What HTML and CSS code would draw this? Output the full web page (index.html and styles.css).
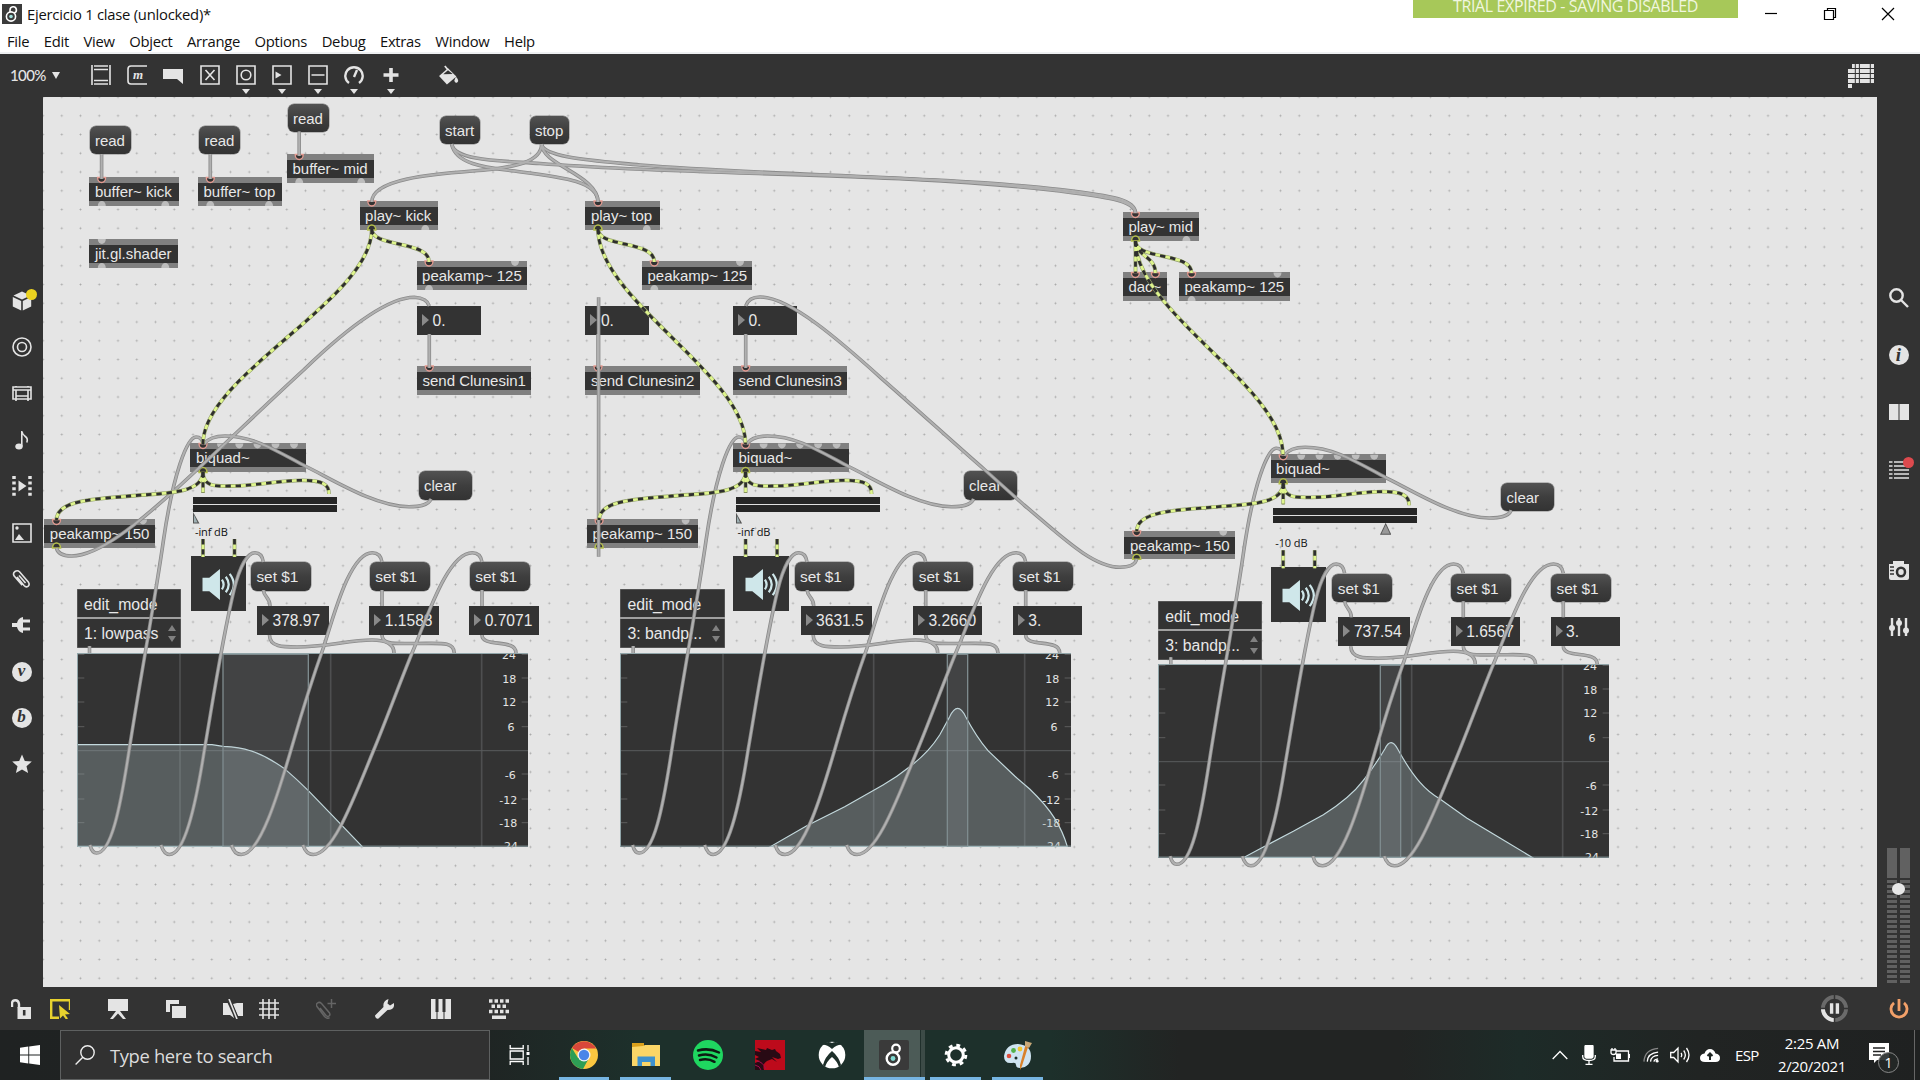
FILE: index.html
```html
<!DOCTYPE html>
<html lang="en">
<head>
<meta charset="utf-8">
<title>Ejercicio 1 clase (unlocked)*</title>
<link rel="stylesheet" href="styles.css">
</head>
<body>
<header class="titlebar">
  <svg class="app-icon" viewBox="0 0 20 20"><rect width="20" height="20" fill="#3b3b3b"/><circle cx="9" cy="12.5" r="4.6" fill="none" stroke="#fff" stroke-width="1.6"/><circle cx="9" cy="12.5" r="1.8" fill="#9fe0dc"/><path d="M8 8V6a3.2 3.2 0 1 1 4.2 3" fill="none" stroke="#fff" stroke-width="1.6"/></svg>
  <span class="window-title">Ejercicio 1 clase (unlocked)*</span>
  <span class="trial">TRIAL EXPIRED - SAVING DISABLED</span>
  <div class="window-controls">
    <svg viewBox="0 0 14 14"><path d="M1 6.5h12"/></svg>
    <svg viewBox="0 0 14 14"><path d="M1.5 3.5h9v9h-9zM4.500 3.500v-2h8v9h-2"/></svg>
    <svg viewBox="0 0 14 14"><path d="M1 1l12 12M13 1L1 13"/></svg>
  </div>
</header>
<nav class="menubar"><span>File</span><span>Edit</span><span>View</span><span>Object</span><span>Arrange</span><span>Options</span><span>Debug</span><span>Extras</span><span>Window</span><span>Help</span></nav>

<div class="toolbar">
  <div class="zoom-level">100% <i class="caret"></i></div>
  <div class="tools">
    <div class="tool"><svg viewBox="0 0 20 20"><path class="l" d="M1 0v20M19 0v20M3 1h14M3 4.500h14M3 15.500h14M3 19h14"/></svg></div>
    <div class="tool"><svg viewBox="0 0 20 20"><path class="l" d="M20 1H4Q1 1 1 4v12q0 3 3 3h16"/><text x="6" y="14" class="glyph-m">m</text></svg></div>
    <div class="tool"><svg viewBox="0 0 20 20"><path class="f" d="M0 4h20v15l-6-5H0z"/></svg></div>
    <div class="tool"><svg viewBox="0 0 20 20"><path class="l" d="M1 1h18v18H1zM5.500 5l9 10M14.500 5l-9 10"/></svg></div>
    <div class="tool"><svg viewBox="0 0 20 20"><path class="l" d="M1 1h18v18H1z"/><circle class="l" cx="10" cy="10" r="4.800"/></svg><i class="caret"></i></div>
    <div class="tool"><svg viewBox="0 0 20 20"><path class="l" d="M1 1h18v18H1z"/><path class="f" d="M3.500 6.500l6 3.500-6 3.500z"/></svg><i class="caret"></i></div>
    <div class="tool"><svg viewBox="0 0 20 20"><path class="l" d="M1 1h18v18H1zM3.500 10h13"/></svg><i class="caret"></i></div>
    <div class="tool"><svg viewBox="0 0 20 20"><path class="h" d="M5 18A8.700 8.700 0 1 1 15 18M10 12l3-7"/></svg><i class="caret"></i></div>
    <div class="tool"><svg viewBox="0 0 20 20"><path class="x" d="M10 3v14M2.500 10h15"/></svg><i class="caret"></i></div>
  </div>
  <svg class="bucket" viewBox="0 0 20 20"><path class="f" d="M1 10.500L9.500 3l8 8L8.500 18.500z"/><path class="l" d="M6.500 1l5 6"/><path d="M5 8.800L9.500 5l4.500 3.500z" fill="#333"/><path class="f" d="M17 11q3.500 4 1.500 5.500T15.500 15z"/></svg>
  <svg class="format-grid" viewBox="0 0 26 24"><path class="f" d="M4 0h22v4H4zM0 5h26v4H0zM0 10h26v4H0zM0 15h26v4H0zM0 20h4v4H0z"/><path d="M7.300 0v20M11.400 0v20M22.300 0v20" stroke="#333" stroke-width="1"/></svg>
</div>

<main class="workspace">
  <aside class="rail rail-left">
    <div class="rail-btn"><svg viewBox="0 0 20 20"><path class="f" d="M10 0.500l8.500 4L10 8.500 1.500 4.500zM.8 6l8.400 4v9.500L.8 15.500zM19.200 6l-8.400 4v9.500l8.400-4z"/></svg><b class="dot dot-yellow"></b></div>
    <div class="rail-btn"><svg viewBox="0 0 20 20"><circle class="l" cx="10" cy="10" r="9"/><circle class="l" cx="10" cy="10" r="4.500"/></svg></div>
    <div class="rail-btn"><svg viewBox="0 0 20 20"><path class="l" d="M1 3h18v12H1zM1 6h18M4 6v9M16 6v9M4 12h12M4 2v1M16 2v1M4 15v2M16 15v2"/></svg></div>
    <div class="rail-btn"><svg viewBox="0 0 20 20"><ellipse class="f" cx="7" cy="16.500" rx="3.700" ry="3"/><path class="l" d="M9.800 16.500V1q.5 3.500 3.500 5.500t1.500 6"/></svg></div>
    <div class="rail-btn"><svg viewBox="0 0 20 20"><path class="f" d="M6.500 4.500l8 5.500-8 5.500z"/><path d="M2 0v20M18 0v20" stroke="#e4e4e4" stroke-width="3.500" stroke-dasharray="3 2.600"/></svg></div>
    <div class="rail-btn"><svg viewBox="0 0 20 20"><path class="l" d="M1 1h18v18H1z"/><circle class="f" cx="5" cy="5" r="1.700"/><path class="f" d="M3 17l4-6 5 6z"/></svg></div>
    <div class="rail-btn"><svg viewBox="0 0 20 20"><path class="l" d="M5 8l7 8.500q2 2.200 4 .8t.5-4L7.500 2.800q-2-2-4.500-.3t-.8 4.600l8 9M7 6.500l6.500 7.500"/></svg></div>
    <div class="rail-btn"><svg viewBox="0 0 20 20"><path class="f" d="M11 2q-5 1-6 6H0v4h5q1 5 6 6zM11 4.500h7v3h-7zM11 12.500h7v3h-7z"/></svg></div>
    <div class="rail-btn"><span class="round-letter">v</span></div>
    <div class="rail-btn"><span class="round-letter">b</span></div>
    <div class="rail-btn"><svg viewBox="0 0 20 20"><path class="f" d="M10 .5l2.800 6.500 7 .6-5.300 4.600 1.600 6.900L10 15.500l-6.100 3.600 1.600-6.900L.2 7.600l7-.6z"/></svg></div>
  </aside>

  <section class="canvas">
    <div class="patch">
      <div class="msg read-1">read</div><div class="msg read-2">read</div><div class="msg read-3">read</div>
      <div class="msg start">start</div><div class="msg stop">stop</div>
      <div class="obj buf-kick">buffer~ kick</div><div class="obj buf-top">buffer~ top</div><div class="obj buf-mid">buffer~ mid</div>
      <div class="obj shader">jit.gl.shader</div>
      <div class="obj play-kick">play~ kick</div><div class="obj play-top">play~ top</div><div class="obj play-mid">play~ mid</div>
      <div class="obj peak-1">peakamp~ 125</div><div class="obj peak-2">peakamp~ 125</div><div class="obj peak-3">peakamp~ 125</div>
      <div class="obj dac">dac~</div>
      <div class="num out-1">0.</div><div class="num out-2">0.</div><div class="num out-3">0.</div>
      <div class="obj send-1">send Clunesin1</div><div class="obj send-2">send Clunesin2</div><div class="obj send-3">send Clunesin3</div>

      <div class="voice voice-1">
        <div class="chain">
          <div class="obj biquad">biquad~</div><div class="obj peak-150">peakamp~ 150</div><div class="msg clear">clear</div>
          <div class="gain"></div><i class="gain-thumb half"></i><span class="gain-db">-inf dB</span>
          <div class="ezdac"><svg viewBox="0 0 36 34"><path d="M1 10h7L19 1v32L8 24H1z" fill="#cfe7ea"/><path d="M21 12q3.500 5 0 10M25 9q6 8 0 16M29 6q8.500 11 0 22" fill="none" stroke="#cfe7ea" stroke-width="2.300"/></svg></div>
        </div>
        <div class="editor">
          <div class="msg set-a">set $1</div><div class="msg set-b">set $1</div><div class="msg set-c">set $1</div>
          <div class="num freq">378.97</div><div class="num gain-val">1.1588</div><div class="num q-val">0.7071</div>
          <div class="umenu"><div>edit_mode</div><div>1: lowpass<i class="spin"></i></div></div>
          <svg class="graph" viewBox="0 0 1353 581">
            <use href="#graph-grid"/>
            <g transform="translate(-110 -339)"><path class="response" d="M110 920V614H515L548 619Q600 621 630 632Q680 648 735 688Q770 718 804 752L870 820L966 920Z"/><path class="band" d="M548 343H804V920H548Z"/></g>
            <use href="#graph-frame"/>
          </svg>
        </div>
      </div>

      <div class="voice voice-2">
        <div class="chain">
          <div class="obj biquad">biquad~</div><div class="obj peak-150">peakamp~ 150</div><div class="msg clear">clear</div>
          <div class="gain"></div><i class="gain-thumb half"></i><span class="gain-db">-inf dB</span>
          <div class="ezdac"><svg viewBox="0 0 36 34"><path d="M1 10h7L19 1v32L8 24H1z" fill="#cfe7ea"/><path d="M21 12q3.500 5 0 10M25 9q6 8 0 16M29 6q8.500 11 0 22" fill="none" stroke="#cfe7ea" stroke-width="2.300"/></svg></div>
        </div>
        <div class="editor">
          <div class="msg set-a">set $1</div><div class="msg set-b">set $1</div><div class="msg set-c">set $1</div>
          <div class="num freq">3631.5</div><div class="num gain-val">3.2660</div><div class="num q-val">3.</div>
          <div class="umenu"><div>edit_mode</div><div>3: bandp...<i class="spin"></i></div></div>
          <svg class="graph" viewBox="0 0 1353 581">
            <use href="#graph-grid"/>
            <g transform="translate(-61 -339)"><path class="response" d="M512 920L620 858L735 800L850 735Q890 712 930 680Q985 640 1020 585L1050 530Q1074 480 1098 530Q1130 590 1165 632L1245 708L1290 747Q1340 795 1365 835Q1390 875 1403 920Z"/><path class="band" d="M1043 343H1104V920H1043Z"/></g>
            <use href="#graph-frame"/>
          </svg>
        </div>
      </div>

      <div class="voice voice-3">
        <div class="chain">
          <div class="obj biquad">biquad~</div><div class="obj peak-150">peakamp~ 150</div><div class="msg clear">clear</div>
          <div class="gain"></div><i class="gain-thumb full"></i><span class="gain-db">-10 dB</span>
          <div class="ezdac"><svg viewBox="0 0 36 34"><path d="M1 10h7L19 1v32L8 24H1z" fill="#cfe7ea"/><path d="M21 12q3.500 5 0 10M25 9q6 8 0 16M29 6q8.500 11 0 22" fill="none" stroke="#cfe7ea" stroke-width="2.300"/></svg></div>
        </div>
        <div class="editor">
          <div class="msg set-a">set $1</div><div class="msg set-b">set $1</div><div class="msg set-c">set $1</div>
          <div class="num freq">737.54</div><div class="num gain-val">1.6567</div><div class="num q-val">3.</div>
          <div class="umenu"><div>edit_mode</div><div>3: bandp...<i class="spin"></i></div></div>
          <svg class="graph" viewBox="0 0 1353 581">
            <use href="#graph-grid"/>
            <g transform="translate(-114 -373)"><path class="response" d="M370 954L430 922L520 875L610 825Q690 775 730 722Q765 678 795 627Q813 590 833 628Q870 695 900 728Q925 757 960 778L1040 835L1140 895L1238 954Z"/><path class="band" d="M781 377H842V954H781Z"/></g>
            <use href="#graph-frame"/>
          </svg>
        </div>
      </div>

      <svg class="cords" viewBox="0 0 1920 1086">
        <defs>
          <g id="graph-grid">
            <path d="M309 0V581M761 0V581M1214 0V581" stroke="#4e4f50" stroke-width="5"/>
            <path d="M0 293H1353" stroke="#5a5c5d" stroke-width="3"/>
            <path d="M3 4h19M3 75h19M3 147h19M3 221h19M3 363h19M3 438h19M3 509h19M1334 4h19M1334 75h19M1334 147h19M1334 221h19M1334 363h19M1334 438h19M1334 509h19" stroke="#5e5e5e" stroke-width="3"/>
            <g class="scale"><text x="1296" y="17">24</text><text x="1297" y="90">18</text><text x="1297" y="159">12</text><text x="1302" y="233">6</text><text x="1300" y="377">-6</text><text x="1294" y="452">-12</text><text x="1294" y="523">-18</text><text x="1296" y="592">-24</text></g>
          </g>
          <path id="graph-frame" d="M0 1.500H1353M0 579.500H1353M1.500 0V581" stroke="#91a5a9" stroke-width="3" fill="none"/>
          <path id="in" d="M-4 0A4 5 0 0 0 4 0Z" fill="#bdbdbd"/>
          <path id="out" d="M-4 0A4 5 0 0 1 4 0Z" fill="#bdbdbd"/>
          <path id="in-on" d="M-4 0A4 5 0 0 0 4 0Z" fill="#333" stroke="#e59a90" stroke-width="1.300"/>
          <path id="out-on" d="M-4 0A4 5 0 0 1 4 0Z" fill="#333" stroke="#b5c04a" stroke-width="1.500"/>
          <g id="main-cords">
            <path d="M101.600 154V179M210.300 154V179M299.200 131.500V156M429.300 334V368M598 334V368M745.700 334V368M598.600 297.300V556.700"/>
            <path d="M541.600 144C541.600 163 510 167 490 169.500C455 173 371.800 175 371.800 202"/>
            <path d="M451.800 144C455 165 490 168 510 170.500C560 177 598 180 598 202"/>
            <path d="M541.600 144C541.600 165 598 175 598 202"/>
            <path d="M451.800 144C454 162 510 161 540 163.500C700 176 900 172 1060 191C1100 196 1135 200 1135.500 213"/>
            <path d="M541.600 144C543 158 600 161 640 165C760 175 940 176 1060 189.500C1115 196 1135 200 1135.500 213"/>
            <path d="M56.500 548C58 555 65 556 71.500 556C100 556 140 521 173.200 491.700C218 451 260 410 303.600 370C340 335 385 297.300 414.300 297.300Q427 298 429.300 306"/>
            <path d="M745.700 306C748 299 753 297 760 297C790 297 840 341 881.400 378.300C920 412 955 444 985 470L1024 505C1060 535 1092 567.300 1120 567.300Q1135 567 1136.700 559"/>
          </g>
          <g id="voice-cords">
            <path d="M90 845Q92 853 96.500 853C111 853 120 810 129 751C140 680 155 600 163.500 540C173 475 187 437 196 437Q202 437 203 444"/>
            <path d="M431 499C428 506 418 506.700 409 506.700C375 506.700 330 478 306 466.500C280 453 255 436 225 436Q210 436 204 444"/>
          </g>
          <g id="editor-cords">
            <path d="M161 845Q164 854.500 169.500 854.500C184 854.500 195 810 204.300 750.500C213 700 222 640 234 590C240 565 248 552.700 255 552.700Q262 552.700 263.300 562"/>
            <path d="M231.700 845Q234 854.500 241.300 854.500C260 854.500 278 795 293 743C304 705 314 674 323.300 648C334 615 350 552.700 372.300 552.700Q380.500 552.700 382 562"/>
            <path d="M303 845Q306 854.500 313.300 854.500C334 854.500 355 795 375 747C387 718 402 677 413.300 650C428 615 448 552.700 472.300 552.700Q480.500 552.700 482 562"/>
            <path d="M263.500 590C263.500 597 270 597 270 606M382 590V606M482 590V606M89.500 646V653"/>
            <path d="M269.500 635C269.500 647 283 647 297 647C325 647 350 640 372 640C390 640 394 647 394 653"/>
            <path d="M382 635C382 645 395 643.500 415 643.500C440 643.500 454 641 454.300 653"/>
            <path d="M482 635C482 648 516 638 516 653"/>
          </g>
          <g id="main-signal">
            <path d="M371.800 229C371.800 248 429 240 429 262"/><path d="M371.800 229C371.800 300 203 375 203 444"/>
            <path d="M598 229C598 248 654.300 240 654.300 262"/><path d="M598 229C598 300 745.500 375 745.500 444"/>
            <path d="M1135.500 241V273"/><path d="M1135.500 241C1135.500 256 1155.400 256 1155.400 273"/><path d="M1135.500 241C1135.500 260 1191.600 252 1191.600 273"/><path d="M1135.500 241C1135.500 312 1283 386 1283 455"/>
          </g>
          <g id="voice-signal">
            <path d="M203 472V493"/><path d="M203 472C203 495 160 493 130 496C100 499 56.500 499 56.500 520"/>
            <path d="M203 472C203 488 218 486 232 486C255 486 280 480.300 302 480.300C322 480.300 329 484 329 494"/>
            <path d="M203 539V557M234.500 539V557"/>
          </g>
          <g id="voice-ports">
            <use href="#in-on" x="203" y="443.500"/><use href="#in" x="221" y="443.500"/><use href="#in" x="239.300" y="443.500"/><use href="#in" x="257.500" y="443.500"/><use href="#in" x="275.500" y="443.500"/><use href="#in" x="294" y="443.500"/>
            <use href="#out-on" x="203" y="472.500"/><use href="#in-on" x="56.500" y="519.500"/><use href="#in" x="143" y="519.500"/><use href="#out-on" x="56.500" y="548"/>
          </g>
          <g id="all-cords">
            <use href="#main-cords"/>
            <use href="#voice-cords"/><use href="#voice-cords" x="542.600"/><use href="#voice-cords" x="1080.200" y="11.300"/>
            <use href="#editor-cords"/><use href="#editor-cords" x="543.700"/><use href="#editor-cords" x="1081.300" y="11.300"/>
          </g>
          <g id="all-signal">
            <use href="#main-signal"/>
            <use href="#voice-signal"/><use href="#voice-signal" x="542.600"/><use href="#voice-signal" x="1080.200" y="11.300"/>
          </g>
        </defs>
        <use href="#in-on" x="101.600" y="177.500"/><use href="#in-on" x="210.300" y="177.500"/><use href="#in-on" x="299.200" y="154.500"/><use href="#in-on" x="371.800" y="201"/><use href="#in-on" x="598" y="201"/><use href="#in-on" x="429" y="261"/><use href="#in-on" x="654.300" y="261"/><use href="#in-on" x="429.300" y="366"/><use href="#in-on" x="598" y="366"/><use href="#in-on" x="745.700" y="366"/><use href="#in-on" x="1135.400" y="212.500"/><use href="#in-on" x="1135.400" y="272.500"/><use href="#in-on" x="1155.400" y="272.500"/><use href="#in-on" x="1191.600" y="272.500"/>
        <use href="#in" x="101.800" y="239"/><use href="#in" x="515" y="261"/><use href="#in" x="740" y="261"/><use href="#in" x="1277.500" y="272.500"/>
        <use href="#out" x="101.800" y="206"/><use href="#out" x="165.300" y="206"/><use href="#out" x="210.300" y="206"/><use href="#out" x="269" y="206"/><use href="#out" x="299.200" y="183"/><use href="#out" x="361.200" y="183"/><use href="#out" x="101.800" y="268"/><use href="#out" x="165.300" y="268"/><use href="#out" x="425.300" y="230"/><use href="#out" x="646.800" y="230"/><use href="#out" x="1186.400" y="241"/><use href="#out" x="429" y="290"/><use href="#out" x="654.300" y="290"/><use href="#out" x="1191.600" y="301"/>
        <use href="#out-on" x="371.800" y="230"/><use href="#out-on" x="598" y="230"/><use href="#out-on" x="1135.500" y="241"/>
        <use href="#voice-ports"/><use href="#voice-ports" x="542.600"/><use href="#voice-ports" x="1080.200" y="11.300"/>
        <use href="#all-cords" class="cord-edge"/><use href="#all-cords" class="cord-core"/>
        <use href="#all-signal" class="signal-edge"/><use href="#all-signal" class="signal-core"/><use href="#all-signal" class="signal-dash"/>
      </svg>
    </div>
  </section>

  <aside class="rail rail-right">
    <div class="rail-btn"><svg viewBox="0 0 20 20"><circle class="h" cx="7.500" cy="7.500" r="6.200"/><path class="h" d="M12 12l7 7"/></svg></div>
    <div class="rail-btn"><span class="round-letter serif">i</span></div>
    <div class="rail-btn"><svg viewBox="0 0 20 20"><path class="f" d="M0 2h9.500v16H0zM10.500 2H20v16h-9.500z"/></svg></div>
    <div class="rail-btn"><svg viewBox="0 0 20 20"><path class="l" d="M0 2h3.500M0 6h3.500M0 10h3.500M0 14h3.500M0 18h3.500M5 2h15M5 6h15M5 10h15M5 14h15M5 18h15"/></svg><b class="dot dot-red"></b></div>
    <div class="rail-btn camera"><svg viewBox="0 0 20 20"><path class="f" d="M0 4h4V1h11v3h5v14q0 2-2 2H2q-2 0-2-2z"/><ellipse cx="12" cy="12" rx="4" ry="4.300" fill="none" stroke="#333" stroke-width="2.500"/><path d="M1 7h4M1 10.500h4M1 14h4" stroke="#333" stroke-width="1.500"/></svg></div>
    <div class="rail-btn"><svg viewBox="0 0 20 20"><path class="h" d="M3 1v18M10 1v18M17 1v18"/><circle class="f" cx="3" cy="11" r="3"/><circle class="f" cx="10" cy="6" r="3"/><circle class="f" cx="17" cy="13.500" r="3"/></svg></div>
    <div class="meter"><div class="channel"></div><div class="channel"></div><b class="level"></b></div>
  </aside>
</main>

<div class="bottombar">
  <div class="cell lock"><svg viewBox="0 0 20 20"><path class="h" d="M1 8V5q0-3.800 3.300-3.800T8 5v4" /><path class="f" d="M6.500 8H20v12H6.500z"/><path d="M13.200 11v5.500" stroke="#333" stroke-width="2.600"/></svg></div>
  <div class="cell select"><svg viewBox="0 0 20 20"><path d="M20 11V1.200H1.200v17.600H9" fill="none" stroke="#e8d22e" stroke-width="2.400"/><path d="M9 6l11 9-5 .5 3 4-2 1-3-4-3 3z" fill="#e8d22e"/></svg></div>
  <div class="cell wide"><svg viewBox="0 0 20 20"><path class="f" d="M0 0h20v12H0zM8 12h4l6 8h-3l-5-5.500L5 20H2z"/></svg></div>
  <div class="cell wide"><svg viewBox="0 0 20 20"><path class="f" d="M0 1h13v4H4v8H0zM6 7h14.500v12H6z"/></svg></div>
  <div class="cell mute"><svg viewBox="0 0 20 20"><path class="f" d="M0 4h6l3 2 2 13-4-3H0zM10 5l4-1h6v13h-5z"/><path d="M5 0l9 20" stroke="#333" stroke-width="4"/><path class="l" d="M6 0l8 20"/></svg></div>
  <div class="cell"><svg viewBox="0 0 20 20"><path class="l" d="M4 0v20M10 0v20M16 0v20M0 4h20M0 10h20M0 16h20"/></svg></div>
  <div class="cell wide clip"><svg viewBox="0 0 20 20"><path d="M4 9l6 7.500q1.500 1.500 3 .5t.5-3L5.500 4.500Q3.500 2.500 1.500 4T1 7.500l7.500 10q3 3 5 1M15.500 0v9M11.500 4.500H20" fill="none" stroke="#656565" stroke-width="1.500"/></svg></div>
  <div class="cell wide"><svg viewBox="0 0 20 20"><path class="f" d="M1 16.500L9.500 8Q8.500 2 14.500 0l-1 4.500 2.500 2L20 4q1 7-6.500 7L4.500 19.500q-3 1-3.500-3z"/></svg></div>
  <div class="cell wide"><svg viewBox="0 0 20 20"><path class="f" d="M0 0h5v13h2V0h5v13h2V0h6v20H0z"/><path d="M6 13v7M13 13v7" stroke="#333"/><path d="M6 0v13M13 0v13" stroke="#333" stroke-width="3"/></svg></div>
  <div class="cell wide"><svg viewBox="0 0 20 20"><path d="M0 2h20M0 12.500h20" stroke="#e4e4e4" stroke-width="3.500" stroke-dasharray="3.500 2"/><path d="M2.500 7.200h16" stroke="#e4e4e4" stroke-width="3.500" stroke-dasharray="3.500 2"/><path class="f" d="M3 16.500h14V20H3z"/></svg></div>
  <svg class="clock-ring" viewBox="0 0 30 30"><circle cx="15" cy="15" r="12" fill="none" stroke="#6a6a6a" stroke-width="4"/><path d="M3 15a12 12 0 0 0 12 12" fill="none" stroke="#e4e4e4" stroke-width="4"/><path d="M15 0v30M0 15h30" stroke="#333" stroke-width="1.500"/><circle cx="15" cy="15" r="9.500" fill="#333"/><path d="M12 9.500v11M18 9.500v11" stroke="#e4e4e4" stroke-width="3.500"/></svg>
  <svg class="power" viewBox="0 0 20 20"><path d="M5 3.800a8 8 0 1 0 10 0M10 0v12" fill="none" stroke="#f2a069" stroke-width="2.800"/></svg>
</div>

<footer class="taskbar">
  <div class="start-btn"><svg viewBox="0 0 20 20"><path fill="#fff" d="M0 2.800l8.300-1.200v8H0zM9.200 1.400L20 0v9.600H9.200zM0 10.400h8.300v8L0 17.300zM9.200 10.400H20V20L9.200 18.500z"/></svg></div>
  <div class="search"><svg viewBox="0 0 20 20"><circle cx="12.500" cy="7.500" r="6.700" fill="none" stroke="#eee" stroke-width="1.400"/><path d="M7.800 12.300L.6 19.500" stroke="#eee" stroke-width="1.400"/></svg><span>Type here to search</span></div>
  <div class="taskview"><svg viewBox="0 0 20 20"><path d="M.7 0v3.500h13V0M.7 6h13v8H.7zM.7 20v-3.500h13V20M18.500 0v6M18.500 12v8" fill="none" stroke="#fff" stroke-width="1.300"/><path d="M17 7h3v3h-3z" fill="#fff"/></svg></div>
  <div class="apps">
    <div class="app open"><svg viewBox="0 0 30 30"><circle cx="15" cy="15" r="14" fill="#fbc740"/><path d="M15 15L2.900 8A14 14 0 0 1 27.100 8.500L15 8.500z" fill="#d9473a"/><path d="M2.900 8A14 14 0 0 0 14 29l6-11-11 0z" fill="#2e9e55"/><circle cx="15" cy="15" r="6.500" fill="#f4f4f4"/><circle cx="15" cy="15" r="5.200" fill="#4a86e8"/></svg></div>
    <div class="app open"><svg viewBox="0 0 30 30"><path d="M1 3h12v6H1z" fill="#dba11c"/><path d="M1 7l11-1 2-1h15v21H1z" fill="#fbd667"/><path d="M6.500 26V16.500H24V26h-4.500v-4h-8.500v4z" fill="#3e92cf"/></svg></div>
    <div class="app"><svg viewBox="0 0 30 30"><circle cx="15" cy="15" r="15" fill="#1fd760"/><path d="M5 10.500q11-3 21 2M6 15.500q9.500-2.500 17.500 2M7 20q8-2 14.500 1.800" fill="none" stroke="#0d1a12" stroke-width="2.500" stroke-linecap="round"/></svg></div>
    <div class="app"><svg viewBox="0 0 30 30"><path fill="#bd0a1b" d="M0 0h30v30H0z"/><path d="M0 11l6 1-4-4 9 2 1-2 5 2 3-1 1 2 4 3 1 4-3 1-6-2 5 5-5-3-5 2q-5 3-3 9H0v-7l5-2-5-2 4-2-4-2z" fill="#280a14"/><path d="M2 21q6 1 9 8M0 25q5 1 6 5" stroke="#a30d50" fill="none"/></svg></div>
    <div class="app"><svg viewBox="0 0 30 30"><circle cx="15" cy="15" r="13.300" fill="#fff"/><path d="M5 5q4-1 10 4 6-5 10-4-5-5-10-2-5-3-10 2zM15 11q-7 6-9 14l2 2q2-6 7-10 5 4 7 10l2-2q-2-8-9-14z" fill="#1d2f2a"/></svg></div>
    <div class="app open active"><svg viewBox="0 0 30 30"><rect width="30" height="30" rx="2" fill="#3a3a3a"/><circle cx="14" cy="18.500" r="6.300" fill="none" stroke="#fff" stroke-width="2.400"/><circle cx="14" cy="18.500" r="2.400" fill="#7fd8d0"/><circle cx="17" cy="8.500" r="3.800" fill="none" stroke="#fff" stroke-width="2.200"/></svg></div>
    <div class="app open"><svg viewBox="0 0 30 30"><circle cx="15" cy="15" r="7.300" fill="none" stroke="#fff" stroke-width="3"/><circle cx="15" cy="15" r="9.800" fill="none" stroke="#fff" stroke-width="3" stroke-dasharray="3.850 3.850"/></svg></div>
    <div class="app open"><svg viewBox="0 0 30 30"><path d="M15 4Q28 5 28 16T17 28q-4 0-4-3t-4-2Q1 24 1 16 3 4 15 4z" fill="#cfe4f1"/><circle cx="6" cy="16" r="2.300" fill="#dd4c3c"/><circle cx="10.500" cy="10.500" r="2.400" fill="#54b04a"/><circle cx="17" cy="9" r="2.400" fill="#f2c530"/><circle cx="13" cy="18" r="1.500" fill="#1d2f2a"/><path d="M26 4l-7 22-2 4 0-5 6-22z" fill="#d9822b"/><path d="M22 1l7 2-3 5-4-2z" fill="#c9a878"/></svg></div>
  </div>
  <div class="tray">
    <svg class="chev" viewBox="0 0 16 16"><path d="M.7 12L8 4.500 15.300 12"/></svg>
    <svg class="mic" viewBox="0 0 14 20"><rect x="3" y="0" width="8" height="13" rx="1.500" fill="#fff"/><path d="M.7 10v1.500q0 4 6.300 4t6.300-4V10M7 15v4M3.500 19.300h7"/></svg>
    <svg class="batt" viewBox="0 0 20 20"><path d="M6 6h12.500v10H4v-4M19.500 9v4M1 5h5v2.500q0 2-2.500 2T1 7.500zM2 3v2M5 3v2"/><path d="M6 8.500h5v5.500H6z" fill="#fff" stroke="none"/></svg>
    <svg class="wifi" viewBox="0 0 18 18"><path d="M1 16Q2 3 16 2" stroke="#888"/><path d="M4.500 16Q5 7 16 6M8 16q.5-6 8-6.500M11.500 16q.5-2.500 4.500-3"/><circle cx="15" cy="15.500" r="1.500" fill="#fff" stroke="none"/></svg>
    <svg class="vol" viewBox="0 0 20 20"><path d="M.7 7.500h3L8 3v14l-4.300-4.500h-3zM11 8q1.500 2 0 4M13.700 5.500q3.300 4.500 0 9M16.500 3q5 7 0 14"/></svg>
    <svg class="cloud" viewBox="0 0 20 20"><path d="M5 17q-5 0-5-4t4.500-4.500Q6 4 10 4t5.500 4.500Q20 9 20 13t-4.500 4z" fill="#fff" stroke="none"/><path d="M10 15V9M7.500 11L10 8.500l2.500 2.500" stroke="#1f2624" stroke-width="2"/></svg>
    <span class="lang">ESP</span>
    <div class="clock"><span>2:25 AM</span><span>2/20/2021</span></div>
    <div class="notif"><svg viewBox="0 0 20 20"><path d="M0 0h20v17H8l-3 3v-3H0z" fill="#fff" stroke="none"/><path d="M4 5h12M4 8.500h12M4 12h8" stroke="#222"/></svg><b>1</b></div>
  </div>
</footer>
</body>
</html>
```
FILE: styles.css
```css
* { box-sizing: border-box; }
body { margin: 0; width: 1920px; height: 1086px; overflow: hidden; background: #fff; display: flex; flex-direction: column; font-family: "Open Sans", "Noto Sans", sans-serif; }
svg { display: block; }
.l { fill: none; stroke: #e4e4e4; stroke-width: 1.6; }
.h { fill: none; stroke: #e4e4e4; stroke-width: 2.4; }
.x { fill: none; stroke: #e4e4e4; stroke-width: 3.6; }
.f { fill: #e4e4e4; }
.caret { display: block; width: 0; height: 0; border: 4px solid transparent; border-top: 5px solid #e4e4e4; border-bottom: 0; }

/* window chrome */
.titlebar { height: 29px; display: flex; align-items: flex-start; padding-left: 2px; }
.app-icon { width: 20px; height: 20px; margin-top: 4px; }
.window-title { margin: 4px 0 0 5px; width: 1386px; font-size: 14.8px; line-height: 20px; letter-spacing: -0.25px; white-space: nowrap; color: #111; }
.trial { width: 325px; height: 18px; background: #a7c859; color: #f0f6df; font-size: 16px; line-height: 12px; letter-spacing: -0.38px; text-align: center; white-space: nowrap; }
.window-controls { display: flex; gap: 44.6px; margin: 7px 0 0 26px; }
.window-controls svg { width: 14px; height: 14px; fill: none; stroke: #000; stroke-width: 1.2; }
.menubar { height: 25px; display: flex; gap: 14.6px; padding-left: 7px; border-bottom: 2px solid #eef0f2; font-size: 14.8px; line-height: 24px; letter-spacing: -0.3px; color: #111; }
.toolbar { height: 43px; background: #333; display: flex; align-items: flex-start; padding-top: 11px; }
.zoom-level { width: 83px; padding-left: 10px; display: flex; align-items: center; gap: 6px; color: #e4e4e4; font: 500 15px/20px "Lato", sans-serif; letter-spacing: -0.6px; }
.zoom-level .caret { border-width: 4.500px; border-top-width: 7px; border-bottom: 0; }
.tools { display: flex; }
.tool { width: 36.2px; display: flex; flex-direction: column; align-items: center; gap: 4px; }
.tool svg { width: 20px; height: 20px; }
.glyph-m { font: italic bold 13px "Liberation Serif", serif; fill: #e4e4e4; }
.bucket { width: 21px; height: 21px; margin-left: 29px; }
.format-grid { width: 26px; height: 24px; margin: -1px 46px 0 auto; }

.workspace { height: 890px; display: flex; background: #333; }
.rail { width: 43px; display: flex; flex-direction: column; align-items: center; }
.rail-left { padding-top: 181px; }
.rail-btn { height: 46.3px; width: 42px; flex: none; display: flex; align-items: center; justify-content: center; position: relative; }
.rail-btn svg { width: 20px; height: 20px; }
.rail-right { padding-top: 172px; }
.rail-right .rail-btn { height: 57.3px; }
.rail-right .camera { margin-top: 43px; }
.dot { position: absolute; border-radius: 50%; }
.dot-yellow { width: 11px; height: 11px; right: 6px; top: 11px; background: #ecd320; }
.dot-red { width: 11px; height: 11px; right: 6px; top: 16px; background: #dd4a4e; }
.round-letter { width: 20px; height: 20px; border-radius: 50%; background: #e4e4e4; color: #333; font: italic bold 17px/17px "Liberation Serif", serif; text-align: center; }
.round-letter.serif { line-height: 19px; font-size: 19px; }
.meter { width: 23px; height: 136px; margin: auto 0 3px; display: flex; justify-content: space-between; position: relative; }
.channel { width: 10px; background: linear-gradient(#616161, #616161) 0 0 / 100% 30px no-repeat, repeating-linear-gradient(#333 0 2px, #616161 2px 5px); }
.level { position: absolute; left: 5px; top: 35px; width: 13px; height: 12px; border-radius: 50%; background: #e8e8e8; }

/* patcher */
.canvas { width: 1834px; height: 890px; position: relative; overflow: hidden; background: #e5e5e5 radial-gradient(circle, #a9a9a9 0 0.6px, transparent 1.3px) 9.4px 9.4px / 18.75px 18.75px; }
.patch { position: absolute; left: -43px; top: -97px; width: 1920px; height: 1086px; color: #e8e8e8; font: 15px "Liberation Sans", Arial, sans-serif; white-space: nowrap; }
.patch .msg, .patch .obj, .patch .num, .umenu, .graph, .gain, .gain-thumb, .gain-db, .ezdac, .cords, .chain, .editor { position: absolute; }
.msg { height: 28.4px; line-height: 29.4px; padding-left: 5.4px; border-radius: 6px; background: linear-gradient(#525252, #3e3e3e 50%, #333); box-shadow: 0 0 0 0.5px #888; }
.obj { height: 28.6px; line-height: 18px; padding-left: 5.5px; border: solid #808080; border-width: 6px 0 5.6px; background: #333; }
.num { height: 29px; line-height: 30px; padding-left: 15.5px; background: #333; font-size: 15.6px; }
.num::before { content: ""; position: absolute; left: 5px; top: 8px; border: 6.5px solid transparent; border-left: 7px solid #8a8a8a; border-right: 0; }
.cords { left: 0; top: 0; width: 1920px; height: 1086px; fill: none; }
.cord-edge { stroke: #8a8a8a; stroke-width: 3.6; }
.cord-core { stroke: #b0b0b0; stroke-width: 2; }
.signal-edge { stroke: #93a06c; stroke-width: 3.8; }
.signal-core { stroke: #dff58d; stroke-width: 2.6; }
.signal-dash { stroke: #2e2e2e; stroke-width: 2.8; stroke-dasharray: 5.4 4.8; }

.read-1 { left: 89.5px; top: 126px; width: 41.5px; }
.read-2 { left: 199px; top: 126px; width: 41px; }
.read-3 { left: 287.5px; top: 103.5px; width: 41px; }
.start { left: 439.6px; top: 116px; width: 40px; }
.stop { left: 529.5px; top: 116px; width: 39px; }
.buf-kick { left: 89.4px; top: 177.2px; width: 89.400px; }
.buf-top { left: 198px; top: 177.2px; width: 84px; }
.buf-mid { left: 287px; top: 154.4px; width: 86.5px; }
.shader { left: 89.4px; top: 239.2px; width: 88.6px; }
.play-kick { left: 359.6px; top: 201px; width: 78.8px; }
.play-top { left: 585.4px; top: 201px; width: 74.3px; }
.play-mid { left: 1122.9px; top: 212.4px; width: 75.7px; }
.peak-1 { left: 416.6px; top: 261px; width: 110.6px; }
.peak-2 { left: 642px; top: 261px; width: 110.4px; }
.peak-3 { left: 1179px; top: 272.4px; width: 110.6px; }
.dac { left: 1122.9px; top: 272.4px; width: 44.6px; }
.out-1 { left: 417px; top: 305.8px; width: 64px; }
.out-2 { left: 585.4px; top: 305.8px; width: 64px; }
.out-3 { left: 732.9px; top: 305.8px; width: 64px; }
.send-1 { left: 417px; top: 366px; width: 114px; }
.send-2 { left: 585.4px; top: 366px; width: 114.3px; }
.send-3 { left: 732.9px; top: 366px; width: 114.3px; }

/* one filter voice: chain and editor use page coordinates of the first voice */
.voice-2 .chain { left: 542.6px; }
.voice-3 .chain { left: 1080.2px; top: 11.3px; }
.voice-2 .editor { left: 543.6px; }
.voice-3 .editor { left: 1081.4px; top: 11.3px; }
.biquad { left: 190.4px; top: 443.2px; width: 115.6px; }
.peak-150 { left: 44.3px; top: 519.4px; width: 110.7px; }
.clear { left: 418.6px; top: 471.3px; width: 53px; }
.voice-2 .clear, .voice-3 .clear { left: 421px; }
.gain { left: 193px; top: 496.8px; width: 144px; height: 15px; background: linear-gradient(#262626 0 7px, #e0e0e0 7px 8px, #262626 8px); }
.gain-thumb { background: #555; }
.gain-thumb::before { content: ""; position: absolute; }
.gain-thumb.half { left: 193px; top: 512px; width: 6.500px; height: 11.500px; clip-path: polygon(0 0, 100% 100%, 0 100%); }
.gain-thumb.half::before { inset: 3px 1px 1px 1px; background: #9eb0b3; clip-path: polygon(0 0, 80% 100%, 0 100%); }
.gain-thumb.full { left: 299.8px; top: 511.5px; width: 11.400px; height: 12px; clip-path: polygon(50% 0, 100% 100%, 0 100%); }
.gain-thumb.full::before { inset: 2px 1.500px 1px; background: #999; clip-path: polygon(50% 0, 100% 100%, 0 100%); }
.gain-db { left: 195px; top: 524px; font: 11px/15px "Open Sans", sans-serif; letter-spacing: -0.1px; color: #111; }
.ezdac { left: 190.5px; top: 555.8px; width: 55.5px; height: 55.4px; background: #333; padding: 12px 0 0 10.500px; }
.ezdac svg { width: 36px; height: 33px; }
.editor .msg { width: 59.8px; top: 562.4px; font-size: 15.4px; }
.set-a { left: 251px; } .set-b { left: 369.8px; } .set-c { left: 469.8px; }
.editor .num { top: 605.8px; width: 69.5px; }
.editor .freq { left: 257px; width: 71.6px; } .gain-val { left: 369.3px; } .q-val { left: 469.2px; }
.umenu { left: 76.7px; top: 589.4px; width: 104.3px; height: 59px; background: #333; font-size: 15.8px; box-shadow: inset 0 0 0 0.5px #777; }
.umenu div { height: 28px; line-height: 31px; padding-left: 7.2px; position: relative; }
.umenu div + div { border-top: 2px solid #a0a0a0; height: 31px; line-height: 30px; }
.spin::before, .spin::after { content: ""; position: absolute; right: 4.5px; border: 4.8px solid transparent; }
.spin::before { top: 5.500px; border-bottom: 6px solid #808080; border-top: 0; }
.spin::after { top: 17px; border-top: 6px solid #808080; border-bottom: 0; }
.graph { left: 76.7px; top: 653px; width: 451px; height: 193.7px; background: #333; overflow: hidden; }
.scale { font: 33px "DejaVu Sans", sans-serif; fill: #e4e4e4; text-anchor: middle; }
.response { fill: rgba(156, 171, 176, 0.35); stroke: #c3d9dd; stroke-width: 3.5; }
.band { fill: rgba(160, 172, 180, 0.14); stroke: #7e8b8e; stroke-width: 4; }

.bottombar { height: 43px; background: #333; display: flex; align-items: center; }
.cell { width: 36px; display: flex; justify-content: center; }
.cell svg { width: 20px; height: 20px; }
.cell.lock { width: 42px; }
.cell.wide { width: 57.5px; }
.cell.select { margin-right: 11.500px; }
.cell.mute { margin-left: 10.500px; }
.cell.clip { margin-left: 10.500px; }
.clock-ring { width: 29px; height: 29px; margin-left: auto; }
.power { width: 20px; height: 20px; margin: 0 11px 0 40px; }

.taskbar { height: 50px; display: flex; background: linear-gradient(90deg, #1f2222, #1f2423 480px, #1d302b 640px, #1d302b 1050px, #222423 1180px, #222423 1400px, #1d2b28 1520px, #212423 1700px, #1f2121); color: #fff; }
.start-btn { width: 60px; padding: 15px 0 0 20px; }
.start-btn svg { width: 20px; height: 20px; }
.search { width: 430px; height: 50px; border: 1px solid #5e6060; background: #313131; display: flex; align-items: center; padding-left: 14px; gap: 15px; font-size: 18.4px; letter-spacing: -0.36px; color: #dcdcdc; white-space: nowrap; }
.search svg { width: 20px; height: 20px; }
.taskview { width: 63px; padding: 15px 0 0 19px; }
.taskview svg { width: 21px; height: 20px; }
.apps { display: flex; }
.app { width: 61.95px; height: 50px; display: flex; justify-content: center; padding-top: 10px; position: relative; }
.app svg { width: 30px; height: 30px; }
.app.open::after { content: ""; position: absolute; left: 5.5px; right: 5.5px; bottom: 0; height: 3px; background: #76b5e2; }
.app.active { background: linear-gradient(90deg, transparent 1px, #4c5b57 1px 57px, #20302c 57px 57.500px, #3c4b47 57.500px); }
.app.active::after { left: 1px; right: 0; }
.tray { margin-left: auto; display: flex; align-items: center; padding-right: 5px; position: relative; }
.tray::after { content: ""; width: 1px; height: 50px; background: #666; margin-left: 15px; }
.tray svg { height: 20px; width: 20px; fill: none; stroke: #fff; stroke-width: 1.3; flex: none; }
.tray .chev { width: 16px; margin-right: 14px; }
.tray .mic { width: 14px; margin-right: 14px; }
.tray .batt { margin-right: 13px; }
.tray .wifi { width: 17px; height: 18px; margin-right: 10px; }
.tray .vol { margin-right: 10px; }
.lang { width: 24px; margin: 0 18px 0 15px; font-size: 15px; letter-spacing: -0.7px; }
.clock { width: 70px; display: flex; flex-direction: column; align-items: center; font-size: 15px; line-height: 23px; letter-spacing: -0.32px; white-space: nowrap; }
.notif { width: 30px; height: 30px; margin: 6px 0 0 22px; position: relative; }
.notif b { position: absolute; left: 9px; top: 9px; width: 21px; height: 21px; border: 1px solid #888; border-radius: 50%; background: rgba(35, 40, 39, 0.9); font: 14px/19px "Open Sans", sans-serif; text-align: center; }
```
